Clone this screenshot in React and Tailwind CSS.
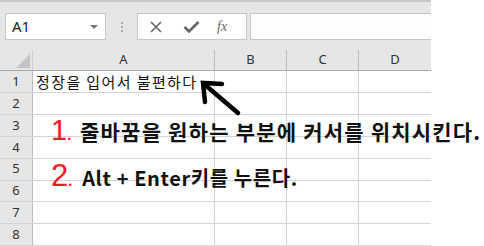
import React from 'react';

const cols = [
  { name: 'A', w: 'w-[182px]' },
  { name: 'B', w: 'w-[72px]' },
  { name: 'C', w: 'w-[72px]' },
  { name: 'D', w: 'w-[72px]' },
];

const rows = [1, 2, 3, 4, 5, 6, 7, 8];

export default function App() {
  return (
    <div className="w-[484px] h-[246px] overflow-hidden bg-white flex" style={{ fontFamily: '"Noto Sans", "Noto Sans CJK KR", sans-serif' }}>
      <div className="w-[431px] flex flex-col relative">
        {/* formula bar */}
        <div className="h-[50px] bg-[#e6e6e6] border-t-2 border-[#c8c8c8] flex items-start pt-[11px] pl-[5px]">
          <div className="w-[101px] h-[27px] bg-white border border-[#c6c6c6] flex items-center justify-between pl-[6px] pr-[7px]">
            <span className="text-[15px] text-[#222]">A1</span>
            <span className="w-0 h-0 border-l-[4px] border-r-[4px] border-t-[4px] border-l-transparent border-r-transparent border-t-[#777]" />
          </div>
          <div className="w-[31px] h-[27px] flex flex-col items-center justify-center gap-[2px]">
            <span className="w-[2px] h-[2px] bg-[#aaa]" />
            <span className="w-[2px] h-[2px] bg-[#aaa]" />
            <span className="w-[2px] h-[2px] bg-[#aaa]" />
          </div>
          <div className="w-[110px] h-[27px] bg-white border border-[#c6c6c6] flex items-center">
            <svg width="14" height="14" viewBox="0 0 14 14" className="ml-[11px]">
              <path d="M2 2 L12 12 M12 2 L2 12" stroke="#666" strokeWidth="1.6" fill="none" />
            </svg>
            <svg width="17" height="14" viewBox="0 0 17 14" className="ml-[20px]">
              <path d="M1.5 7 L6 11.5 L15.5 2" stroke="#666" strokeWidth="2.6" fill="none" />
            </svg>
            <span className="ml-[17px] text-[14px] italic text-[#666]" style={{ fontFamily: '"Liberation Serif", serif' }}>fx</span>
          </div>
          <div className="w-[3px]" />
          <div className="flex-1 h-[27px] bg-[#fdfdfd] border border-[#c6c6c6] border-r-0" />
        </div>

        {/* column headers */}
        <div className="h-[22px] flex bg-[#e6e6e6] border-b border-[#ababab]">
          <div className="w-[33px] h-full relative border-r border-[#d0d0d0]">
            <span className="absolute right-[2px] bottom-[2px] w-0 h-0" style={{ borderBottom: '14px solid #c4c4c4', borderLeft: '14px solid transparent' }} />
          </div>
          {cols.map((c) => (
            <div key={c.name} className={`${c.w} h-full flex items-center justify-center text-[13px] text-[#333] border-r border-[#bdbdbd] last:border-r-0`}>
              {c.name}
            </div>
          ))}
        </div>

        {/* rows */}
        {rows.map((r) => (
          <div key={r} className="h-[22px] flex border-b border-[#d4d4d4]">
            <div className="w-[33px] h-full bg-[#e6e6e6] flex items-center justify-center text-[13px] text-[#333] border-r border-[#bdbdbd]">
              {r}
            </div>
            {cols.map((c) => (
              <div key={c.name} className={`${c.w} h-full border-r border-[#d4d4d4] last:border-r-0 flex items-center`}>
                {r === 1 && c.name === 'A' && (
                  <span className="pl-[3px] text-[15px] tracking-[1.4px] text-[#111] whitespace-nowrap" style={{ fontFamily: '"Noto Sans CJK KR", sans-serif' }}>정장을 입어서 불편하다</span>
                )}
              </div>
            ))}
          </div>
        ))}

        {/* annotations */}
        <svg className="absolute left-[196px] top-[76px]" width="50" height="44" viewBox="0 0 50 44">
          <path d="M8 8 L42 37" stroke="#000" strokeWidth="4.5" strokeLinecap="round" fill="none" />
          <path d="M26 8 L7 7 L9 26" stroke="#000" strokeWidth="4.5" strokeLinecap="round" strokeLinejoin="miter" fill="none" />
        </svg>

        <div className="absolute left-[51px] top-[116px] flex items-baseline whitespace-nowrap">
          <span className="text-[29px] leading-none text-[#ee1c24]" style={{ fontFamily: '"Liberation Sans", sans-serif' }}>1</span>
          <span className="text-[14px] leading-none text-[#ee1c24] font-bold">.</span>
          <span className="ml-[9px] text-[21px] tracking-[1.2px] leading-none font-bold text-[#111]" style={{ fontFamily: '"Noto Sans CJK KR", sans-serif' }}>줄바꿈을 원하는 부분에 커서를 위치시킨다.</span>
        </div>

        <div className="absolute left-[51px] top-[160px] flex items-baseline whitespace-nowrap">
          <span className="text-[31px] leading-none text-[#ee1c24]" style={{ fontFamily: '"Liberation Sans", sans-serif' }}>2</span>
          <span className="text-[14px] leading-none text-[#ee1c24] font-bold">.</span>
          <span className="ml-[10px] text-[20px] tracking-[0.6px] leading-none font-bold text-[#111]" style={{ fontFamily: '"Noto Sans CJK KR", sans-serif' }}>Alt + Enter키를 누른다.</span>
        </div>
      </div>
    </div>
  );
}
